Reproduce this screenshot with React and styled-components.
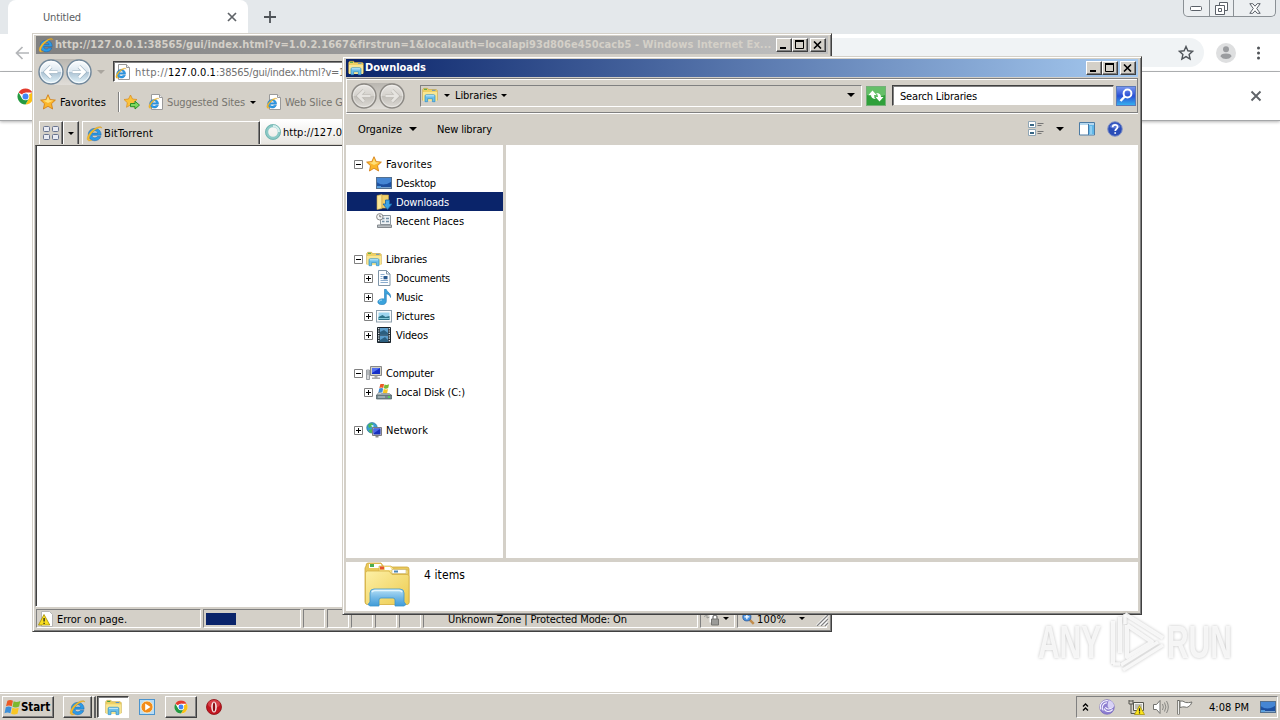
import React, { useLayoutEffect, useRef } from 'react';
import styled, { createGlobalStyle, css } from 'styled-components';

const Global = createGlobalStyle`
  * { box-sizing: border-box; }
  html, body { margin: 0; padding: 0; }
  body { width: 1280px; height: 720px; overflow: hidden; background: #fff; }
  svg { display: block; flex: none; }
`;

const FACE = '#d4d0c8';

const Desktop = styled.div`
  position: relative;
  width: 1280px;
  height: 720px;
  overflow: hidden;
  display: flex;
  flex-direction: column;
  font-family: 'DejaVu Sans Condensed', 'DejaVu Sans', sans-serif;
  font-stretch: condensed;
  font-size: 11px;
  line-height: 14px;
  color: #000;
`;

const LabelBox = styled.span`
  flex: none;
  white-space: pre;
  margin-left: ${p => p.$ml || 0}px;
  padding-top: ${p => (p.$bold ? 0 : 2)}px;
  color: ${p => p.$color || 'inherit'};
  font-weight: ${p => (p.$bold ? 700 : 400)};
  font-size: ${p => p.$size || 11}px;
`;

/* Text whose tracking is set so that it takes the given width. */
function Label({ w, ml, color, bold, size, children }) {
  const ref = useRef(null);
  useLayoutEffect(() => {
    const el = ref.current;
    if (!w) return;
    el.style.letterSpacing = '0px';
    const natural = el.getBoundingClientRect().width;
    el.style.letterSpacing = `${(w - natural) / el.textContent.length}px`;
  }, [w, children]);
  return (
    <LabelBox ref={ref} $ml={ml} $color={color} $bold={bold} $size={size}>{children}</LabelBox>
  );
}

const Gap = styled.div`
  flex: none;
  width: ${p => p.$w}px;
`;
const Spring = styled.div`
  flex: 1;
`;
const Row = styled.div`
  display: flex;
  align-items: center;
`;
const Arrow = styled.i`
  flex: none;
  width: 0;
  height: 0;
  margin-left: ${p => p.$ml || 0}px;
  border: ${p => p.$s || 3}px solid transparent;
  border-top-color: ${p => p.$color || '#000'};
  border-bottom-width: 0;
`;

/* ---------- icons ---------- */

const Svg = ({ s = 16, w, h, vb = '0 0 16 16', children }) => (
  <svg width={w || s} height={h || s} viewBox={vb} fill="none">{children}</svg>
);

const IELetter = () => (
  <>
    <path d="M14.200 9.600H5.600c.2 1.600 1.200 2.500 2.700 2.500 1 0 1.800-.4 2.300-1.200h3.300c-.8 2.400-2.900 3.900-5.600 3.900-3.600 0-6.100-2.400-6.100-5.800s2.500-5.800 6.100-5.800c3.500 0 6 2.500 5.900 6.400zM5.700 7.600h5.400C10.900 6.200 9.900 5.400 8.400 5.400S5.900 6.200 5.700 7.600z" fill="#2b9be8" stroke="#1463ac" strokeWidth=".5" />
    <path d="M15 2.900C14.300.6 10.600 1.300 6.500 4.500 2.400 7.700.3 12.200 1.500 14.200c.7 1.100 2.200.9 4-.1-1.700.4-2.500 0-2.500-1.200C3 10.600 5.400 7.200 8.600 4.700 11.600 2.300 14 1.700 15 2.900z" fill="#f6bb2b" stroke="#d39a1c" strokeWidth=".4" />
  </>
);
const IE = ({ s = 16 }) => <Svg s={s} vb="0 0 16 16"><IELetter /></Svg>;
const IEPage = () => (
  <Svg>
    <path d="M3.500.500h8l3 3v12h-11z" fill="#fff" stroke="#9a9a9a" />
    <path d="M11.500.500v3h3" stroke="#9a9a9a" fill="#eee" />
    <g transform="translate(0 3) scale(.75)"><IELetter /></g>
  </Svg>
);
const Star = ({ s = 16 }) => (
  <Svg s={s}>
    <path d="M8 .7l2.200 4.900 5.200.5-3.900 3.600 1.100 5.300L8 12.300 3.400 15l1.100-5.300L.6 6.100l5.200-.5z" fill="#fbb62a" stroke="#d17a12" strokeWidth=".8" />
    <path d="M8 2.500l1.600 3.700 3.700.4-5.300 2.400-5-2.400 3.500-.4z" fill="#ffe07a" />
  </Svg>
);
const StarAdd = () => (
  <Svg>
    <path d="M6.500 1l2 4 4.500.5-3.300 3.200.8 4.600-4-2.300-4 2.300.8-4.600L0 5.500 4.500 5z" fill="#fbc23a" stroke="#d88a1a" strokeWidth=".7" />
    <path d="M6.500 9.500h4.500v-2.300l4.500 3.900-4.500 3.900v-2.300H6.500z" fill="#7ed860" stroke="#1e8a1e" strokeWidth=".9" />
  </Svg>
);
const Libraries = ({ s = 16 }) => (
  <Svg s={s}>
    <path d="M.7 2.500l1-1.200h4l.8 1.200h7.800l1 1v9.700H.7z" fill="#efd163" stroke="#c7a53c" strokeWidth=".6" />
    <path d="M2 2.300h3" stroke="#43a047" />
    <path d="M10 3.300h3.500" stroke="#5b8fc9" />
    <path d="M1 5h14v9H1z" fill="#f8e693" />
    <path d="M3 9.200c0-1 .5-1.400 1.400-1.400h7.200c.9 0 1.400.4 1.400 1.400v5.500h-2.600v-3H5.600v3H3z" fill="#6bbfea" stroke="#2e8fc6" strokeWidth=".7" />
    <path d="M3.800 8.800h8.400" stroke="#c8ebfb" />
  </Svg>
);
const LibrariesLarge = () => (
  <Svg w={46} h={46} vb="0 0 46 46">
    <defs>
      <linearGradient id="lf" x1="0" y1="0" x2="1" y2="1">
        <stop offset="0" stopColor="#fdf0a6" /><stop offset="1" stopColor="#eccb4f" />
      </linearGradient>
      <linearGradient id="lb" x1="0" y1="0" x2="0" y2="1">
        <stop offset="0" stopColor="#b5e0f6" /><stop offset=".5" stopColor="#74b9e6" /><stop offset="1" stopColor="#3f9bd8" />
      </linearGradient>
    </defs>
    <path d="M2 4q0-3 2-3h13l3 4h23q2 0 2 2v33q0 2-2 2H3q-2 0-2-2V6z" fill="#e9c95c" stroke="#cda63a" strokeWidth=".8" />
    <path d="M5 2h12l1 4H5z" fill="#fff" />
    <path d="M6 2h4v3H6z" fill="#4caf50" />
    <path d="M15 4h12l3 3 14 1v4H15z" fill="#f7e38a" stroke="#d1ad42" strokeWidth=".6" />
    <path d="M16 4.500h4v3h-4z" fill="#e5522e" />
    <path d="M21 5h5l2 3h-7z" fill="#fff" />
    <path d="M28 7.500h14v4H28z" fill="#fff" stroke="#bda45b" strokeWidth=".5" />
    <path d="M30 8.500h4v2h-4z" fill="#4b86b8" />
    <path d="M1.500 11q0-2 2-2H25l3 3.500h15q2 0 2 2v26q0 2-2 2H3.500q-2 0-2-2z" fill="url(#lf)" stroke="#d6b144" strokeWidth=".8" />
    <path d="M6 31q0-4 4-4h26q4 0 4 4v9l2 2.500-2 1.500h-9v-6q0-2-2-2H17q-2 0-2 2v6H6l-2-1.500L6 40z" fill="url(#lb)" stroke="#3e94cc" strokeWidth=".8" />
    <path d="M8 30q1-1.500 3-1.500h24q2 0 3 1.500" stroke="#e2f5fd" strokeWidth="1.500" />
  </Svg>
);
const DesktopIcon = () => (
  <Svg>
    <rect x=".5" y="2.500" width="15" height="11" fill="#2863b8" stroke="#54708f" />
    <path d="M1 3h14v4Q7 12 1 7z" fill="#4586d4" />
    <path d="M1 8q7 4 14-1v5H1z" fill="#1d50a0" />
    <path d="M5 12.500h10" stroke="#7fa6cf" /><path d="M1 12h4" stroke="#71bdf4" strokeWidth="1.400" />
  </Svg>
);
const DownloadsIcon = () => (
  <Svg>
    <path d="M1 1.500L6 .5v14l-5 1z" fill="#f9e696" stroke="#c9a646" strokeWidth=".6" />
    <path d="M6 1h6.500v13H6z" fill="#efcf68" stroke="#c9a646" strokeWidth=".6" />
    <path d="M9.500 6h4v4H16l-4.500 5.500L7 10h2.500z" fill="#3ba3e6" stroke="#1464a6" strokeWidth=".8" />
  </Svg>
);
const Recent = () => (
  <Svg>
    <path d="M4.500 2.500h10v9h-10z" fill="#eef2f5" stroke="#8c979f" />
    <path d="M6 5.500h2.500M10 5.500h3M6 8.500h2.500M10 8.500h3" stroke="#7590a5" strokeWidth="1.500" />
    <path d="M1.500 12h14v2.500h-14z" fill="#b9bec2" stroke="#868b8f" />
    <circle cx="3.800" cy="3.800" r="3.200" fill="#f5f5f5" stroke="#8a8a8a" />
    <path d="M3.800 1.800v2h1.500" stroke="#555" strokeWidth=".8" />
  </Svg>
);
const Documents = () => (
  <Svg>
    <path d="M2.500.5h8L14 4v11.500H2.500z" fill="#fbfdff" stroke="#7f95a8" />
    <path d="M10.500.5V4H14" stroke="#7f95a8" />
    <path d="M4.500 4.500h4M4.500 6.500h2M4.500 8.500h2M4.500 10.500h7.500M4.500 12.500h7.500" stroke="#7da3c8" strokeWidth=".9" />
    <path d="M7.500 6h4v3.300h-4z" fill="#27598f" />
  </Svg>
);
const Music = () => (
  <Svg>
    <path d="M8.500.3h1.700c.3 2.600 5.100 3.400 4.300 8.200-.4-2-2-3.400-4.200-3.700v7.500c0 2-1.900 3.500-4.300 3.500S1.800 14.500 1.800 13c0-1.800 2.100-3.200 4.700-3.200.7 0 1.400.1 2 .4z" fill="#3aa3dc" stroke="#2079b8" strokeWidth=".6" />
    <path d="M3 12.500q1-1.500 3-1.500" stroke="#a8dcf5" />
  </Svg>
);
const Pictures = () => (
  <Svg>
    <rect x=".5" y="2.500" width="15" height="11.500" fill="#f8fafb" stroke="#8fa1ae" />
    <rect x="2.500" y="4.500" width="11" height="7.500" fill="#9dd5ee" />
    <path d="M2.500 9l4-2 3 2 4-1v4h-11z" fill="#2d7489" />
    <path d="M2.500 10.500h11" stroke="#83c8d8" />
  </Svg>
);
const Videos = () => (
  <Svg>
    <path d="M1.500.5h13v15h-13z" fill="#26333d" stroke="#18222a" />
    <path d="M4 1h8v6.500H4zM4 8.500h8V15H4z" fill="#5b9dcb" />
    <path d="M4 5l4-2 4 3v1.500H4zM4 13l5-3 3 3v2H4z" fill="#2b5f80" />
    <path d="M2.700 1v14M13.300 1v14" stroke="#eef4f8" strokeWidth="1.200" strokeDasharray="1.200 1.200" />
  </Svg>
);
const Computer = () => (
  <Svg>
    <path d="M.5 5h3v9.500h-3z" fill="#d6d8da" stroke="#888d92" strokeWidth=".8" />
    <path d="M1.300 7h1.400M1.300 9h1.400" stroke="#59646c" strokeWidth=".8" />
    <path d="M4.500 1.500h11v9h-11z" fill="#d2d2c8" stroke="#888" />
    <path d="M6 3h8v6H6z" fill="#1630c8" /><path d="M6 3h8L6 8z" fill="#5471ef" />
    <path d="M8.500 10.500h3v2h-3zM6 12.500h8v1.500H6z" fill="#aaa" />
  </Svg>
);
const FlagPanes = () => (
  <>
    <path d="M3.200 1.700q2.600-1.500 5.200 0L7.300 6.900Q4.500 5.500 1.900 6.900z" fill="#ec5a24" />
    <path d="M9.100 2.200q2.800 1.500 6.300-.4l-1.200 5.300q-3.200 1.600-6.200.2z" fill="#7cb82f" />
    <path d="M1.700 7.800q2.700-1.400 5.400 0L6 13.400q-2.800-1.400-5.500 0z" fill="#3c8fd9" />
    <path d="M7.900 8.300q2.900 1.400 6-.1l-1.200 5.600q-3.100 1.400-6 .1z" fill="#f9c623" />
  </>
);
const Flag = ({ s = 16 }) => <Svg s={s} vb="0 0 16 16"><FlagPanes /></Svg>;
const Disk = () => (
  <Svg>
    <g transform="translate(2 -1) scale(.72)"><FlagPanes /></g>
    <path d="M2.500 8.500h2l1 1h8l2 2H.5z" fill="#c7cfd2" stroke="#717b80" strokeWidth=".6" />
    <path d="M.5 11h15v4H.5z" fill="#758990" stroke="#4c5b61" strokeWidth=".7" />
    <path d="M2 13h7" stroke="#c1cdd2" /><path d="M12 13h2" stroke="#49e04b" strokeWidth="1.500" />
  </Svg>
);
const Network = () => (
  <Svg>
    <circle cx="6" cy="5.800" r="5.300" fill="#3a9dd5" stroke="#22708f" strokeWidth=".6" />
    <path d="M2 3q3-3 5-1l-1 3-3 1zM2.500 8l4-1 1 3-3 1z" fill="#4bb956" />
    <path d="M5 3.500q1.500-1 3 .5l-1.500 1.500z" fill="#cdeef8" />
    <path d="M6.500 5.500h9v8h-9z" fill="#d8d8d0" stroke="#7b7b83" />
    <path d="M7.500 6.500h7v6h-7z" fill="#1730bd" /><path d="M7.500 6.500h7l-7 5z" fill="#4a69eb" />
    <path d="M9.500 14h3v1.500h-3z" fill="#888" />
  </Svg>
);
const NavArrow = ({ back, active, s = 26 }) => (
  <Svg s={s} vb="0 0 26 26">
    <defs>
      <linearGradient id={active ? 'na' : 'nd'} x1="0" y1="0" x2="0" y2="1">
        {active
          ? <><stop offset="0" stopColor="#fdfeff" /><stop offset=".48" stopColor="#dce7ef" /><stop offset=".52" stopColor="#aec4d4" /><stop offset="1" stopColor="#e5f6fd" /></>
          : <><stop offset="0" stopColor="#e9e7e3" /><stop offset=".5" stopColor="#d4d1cc" /><stop offset=".52" stopColor="#c2bfb9" /><stop offset="1" stopColor="#dedbd6" /></>}
      </linearGradient>
    </defs>
    <circle cx="13" cy="13" r="12" fill={active ? 'url(#na)' : 'url(#nd)'} stroke={active ? '#71879a' : '#8b8883'} strokeWidth="1.400" />
    <circle cx="13" cy="13" r="10.700" stroke="#fff" strokeOpacity={active ? '.8' : '.4'} />
    <g transform={back ? '' : 'translate(26 0) scale(-1 1)'}>
      <path d="M13 7.500L7.500 13l5.500 5.500M8 13h11.500" stroke={active ? '#8fa6b8' : '#b4b1ab'} strokeWidth="4" strokeOpacity=".7" />
      <path d="M13 7.500L7.500 13l5.500 5.500M8 13h11.500" stroke={active ? '#fff' : '#e6e4e0'} strokeWidth="2.600" />
    </g>
  </Svg>
);
const QuickTabs = () => (
  <Svg s={18} vb="0 0 18 18">
    {[[1.500, 2.500], [10.500, 2.500], [1.500, 10.500], [10.500, 10.500]].map(([x, y]) => (
      <rect key={`${x}-${y}`} x={x} y={y} width="6" height="5" rx="1" fill="#e9ebf3" stroke="#69748f" />
    ))}
  </Svg>
);
const Spinner = () => (
  <Svg>
    <circle cx="8" cy="8" r="6.300" stroke="#8cc9c6" strokeWidth="3" />
    <path d="M8 1.700a6.300 6.300 0 0 1 6.300 6.300" stroke="#d5efee" strokeWidth="2.400" />
    <circle cx="8" cy="8" r="7.500" stroke="#58a4a0" strokeWidth=".6" />
  </Svg>
);
const Chrome = ({ s = 16 }) => (
  <Svg s={s}>
    <circle cx="8" cy="8" r="7.500" fill="#fff" />
    <path d="M8 8L1.500 4.250A7.500 7.500 0 0 1 14.500 4.250H8z" fill="#e33b2e" />
    <path d="M8 8L14.500 4.250A7.500 7.500 0 0 1 8 15.500l3.200-5.700z" fill="#fbc116" />
    <path d="M8 8l3.200 1.800L8 15.500A7.500 7.500 0 0 1 1.500 4.250L4.800 9.800z" fill="#249a41" />
    <circle cx="8" cy="8" r="3.600" fill="#fff" /><circle cx="8" cy="8" r="2.800" fill="#4285f4" />
  </Svg>
);
const Warning = () => (
  <Svg>
    <path d="M3.500.5h8l3 3v12h-11z" fill="#fff" stroke="#b5b5b5" />
    <path d="M6 3.500L11.800 14H.5z" fill="#f9df20" stroke="#a58d06" strokeWidth=".8" strokeLinejoin="round" />
    <path d="M6.100 7v3.500M6.100 11.700v1.300" stroke="#222" strokeWidth="1.300" />
  </Svg>
);
const Player = () => (
  <Svg>
    <rect x=".5" y=".5" width="15" height="15" fill="#b8dcf5" stroke="#4b94ce" />
    <circle cx="8" cy="8" r="6" fill="#f28c1a" stroke="#fff2d0" strokeWidth=".8" />
    <path d="M6.200 4.500L11.500 8l-5.300 3.500z" fill="#fff" />
  </Svg>
);
const Opera = () => (
  <Svg>
    <circle cx="8" cy="8" r="7.500" fill="#c21621" stroke="#8c0c12" strokeWidth=".8" />
    <ellipse cx="8" cy="5" rx="6" ry="4" fill="#e55b60" opacity=".6" />
    <ellipse cx="8" cy="8" rx="2.800" ry="5.500" fill="#f7e9e9" /><ellipse cx="8" cy="8" rx="1.200" ry="4.500" fill="#8f0e14" />
  </Svg>
);
const BitTorrent = () => (
  <Svg>
    <circle cx="8" cy="8" r="7.300" fill="#8e7fd0" stroke="#6c5cb8" strokeWidth=".6" />
    <path d="M2 10.500A6.200 6.200 0 0 1 9 1.800M4.300 11.500A4.800 4.800 0 0 1 8 3.800M5.200 9.500c.8 3.400 5 4.200 8.500 1M6.500 8c.6 2.500 4.500 2.800 7.800-.5" stroke="#f4f2ff" strokeWidth="1.100" />
    <path d="M9.500.9A7.300 7.300 0 0 1 15.200 7c-2 2.500-6 3-6.500.5C8.300 5 9.500 2.500 9.500.9z" fill="#d8d2f5" />
  </Svg>
);
const NetTray = () => (
  <Svg w={17} vb="0 0 17 16">
    <path d="M5.500 3.500h10v8h-10z" fill="#f4f4f0" stroke="#55554f" /><path d="M7 5h7v5H7z" fill="#bdbdb6" />
    <path d="M1 1v4h4V1M3 5v9.500h5M2 1v2M4 1v2" stroke="#55554f" />
    <path d="M11.500 6.500l5 9h-10z" fill="#fce51d" stroke="#9f8905" strokeWidth=".7" />
    <path d="M11.500 9.200v3.300M11.500 13.300v1.200" stroke="#222" strokeWidth="1.200" />
  </Svg>
);
const Speaker = () => (
  <Svg>
    <path d="M.5 5.500h3L7 1.500v13l-3.500-4h-3z" fill="#fff" stroke="#71716d" strokeLinejoin="round" />
    <path d="M9.500 5q1.700 3 0 6M11.500 3.500q2.800 4.500 0 9M13.500 2q3.600 6 0 12" stroke="#878783" />
  </Svg>
);
const ActionFlag = () => (
  <Svg>
    <path d="M1.500 1v14.500" stroke="#62625e" strokeWidth="2.400" /><path d="M1.500 2v13" stroke="#fff" strokeWidth=".9" />
    <path d="M3 2q3-.5 5.500 1.500 3 .5 6.500-.5-1 3.500-4 5-1.500.700-3 0Q6 7.500 3 8.500z" fill="#fff" stroke="#72726e" />
  </Svg>
);
const ViewIcon = () => (
  <Svg>
    <path d="M.5.5h7v6h-7zM.5 8.500h7v6h-7z" fill="#fff" stroke="#90a6b5" />
    <path d="M2 3h4v2H2zM2 11h4v2H2z" fill="#386684" />
    <path d="M9.500 2.500h6M9.500 4.500h4M9.500 10.500h6M9.500 12.500h4" stroke="#777" />
  </Svg>
);
const PaneIcon = () => (
  <Svg>
    <path d="M.5 1.500h15V14H.5z" fill="#fff" stroke="#4c7ba4" />
    <path d="M1 2h14v2H1z" fill="#b5d8f0" /><path d="M9.500 4H15v9.500H9.500z" fill="#61b7e8" /><path d="M9.500 3v11" stroke="#437aaa" />
    <path d="M12 5v8" stroke="#bfe5f9" />
  </Svg>
);
const Help = () => (
  <Svg>
    <circle cx="8" cy="8" r="7.300" fill="#2a4db8" stroke="#8494c6" />
    <path d="M2.500 6a6 6 0 0 1 11 0q-5 3-11 0z" fill="#5d79d6" />
    <path d="M5.600 6.300c0-3.400 5-3.200 5-.2 0 1.900-2.400 1.900-2.400 3.900M8.200 11.200v1.600" stroke="#fff" strokeWidth="1.700" />
  </Svg>
);
const Refresh = () => (
  <Svg s={20} vb="0 0 20 20">
    <rect x=".5" y=".5" width="19" height="19" fill="#2fa03a" stroke="#74b078" />
    <path d="M1 1h18v8Q10 13 1 9z" fill="#65bf68" />
    <path d="M2.500 9l4-4.500 4 4.500H8q0 3 2 4-5 0-5-4zM17.500 11l-4 4.500-4-4.500H12q0-3-2-4 5 0 5 4z" fill="#fff" />
  </Svg>
);
const SearchIcon = () => (
  <Svg s={20} vb="0 0 20 20">
    <defs>
      <linearGradient id="sr" x1="0" y1="0" x2="0" y2="1">
        <stop offset="0" stopColor="#7c9af0" /><stop offset=".5" stopColor="#2a4fd4" /><stop offset="1" stopColor="#37b4f0" />
      </linearGradient>
    </defs>
    <rect x=".5" y=".5" width="19" height="19" fill="url(#sr)" stroke="#5b79b9" />
    <circle cx="11.500" cy="7.500" r="3.900" stroke="#fff" strokeWidth="2" /><path d="M8.800 10.500L4.500 15" stroke="#fff" strokeWidth="2.400" />
  </Svg>
);
const Lock = () => (
  <Svg w={18} vb="0 0 18 16">
    <path d="M1 5.500l3-1.500v3l4-1.500" stroke="#9b9b97" /><path d="M6.500.5h7v11h-7z" fill="#fff" />
    <path d="M8.500 8h7v6h-7z" fill="#9b9b98" stroke="#747471" /><path d="M10 8V5.500q2-3 4 0V8" stroke="#777" strokeWidth="1.300" />
  </Svg>
);
const ZoomIcon = () => (
  <Svg s={13} vb="0 0 16 16">
    <path d="M9 9l5.500 5.500" stroke="#c28c4b" strokeWidth="3" /><circle cx="6" cy="6" r="5" fill="#4b93e0" stroke="#2b5b9e" />
    <path d="M6 3v6M3 6h6" stroke="#fff" strokeWidth="1.600" />
  </Svg>
);

/* ---------- browser behind ---------- */

const TabStrip = styled.div`
  flex: none;
  display: flex;
  height: 34px;
  padding-left: 8px;
  background: #e4e8eb;
`;
const BrowserTab = styled.div`
  display: flex;
  align-items: center;
  width: 240px;
  height: 34px;
  padding: 0 11px 0 35px;
  border-radius: 8px 8px 0 0;
  background: #fff;
`;
const CaptionGroup = styled.div`
  display: flex;
  width: 93px;
  height: 17px;
  margin-right: 4px;
  border: 1px solid #8a9095;
  border-top: 0;
  border-radius: 0 0 5px 5px;
  background: #eceff1;
`;
const CaptionCell = styled.div`
  display: flex;
  align-items: center;
  justify-content: center;
  width: ${p => p.$w}px;
  border-left: ${p => (p.$first ? 0 : 1)}px solid #8a9095;
`;
const BrowserBar = styled.div`
  flex: none;
  display: flex;
  align-items: center;
  height: 38px;
  padding: 0 15px 0 15px;
  background: #fff;
  border-bottom: 1px solid #b5b7b9;
`;
const Omnibox = styled.div`
  flex: 1;
  display: flex;
  align-items: center;
  justify-content: flex-end;
  height: 29px;
  margin: 0 12px 0 90px;
  padding-right: 10px;
  border-radius: 15px;
  background: #f0f3f5;
`;
const InfoBar = styled.div`
  flex: none;
  display: flex;
  align-items: center;
  justify-content: space-between;
  height: 49px;
  padding: 0 18px 0 17px;
  background: #fff;
  border-bottom: 1px solid #a5a7a9;
  box-shadow: 0 1px 3px rgba(0, 0, 0, 0.3);
`;
const Page = styled.div`
  flex: 1;
`;

function Browser() {
  return (
    <>
      <TabStrip>
        <BrowserTab>
          <Label w={38} color="#5a5d61">Untitled</Label>
          <Spring />
          <Svg s={10} vb="0 0 10 10"><path d="M1 1l8 8M9 1L1 9" stroke="#5f6368" strokeWidth="1.700" /></Svg>
        </BrowserTab>
        <Gap $w={16} />
        <Row><Svg s={12} vb="0 0 12 12"><path d="M6 0v12M0 6h12" stroke="#4e5358" strokeWidth="1.800" /></Svg></Row>
        <Spring />
        <CaptionGroup>
          <CaptionCell $w={25} $first><Svg w={12} h={5} vb="0 0 12 5"><rect x=".5" y=".5" width="11" height="4" rx="1" fill="#fff" stroke="#5a6068" /></Svg></CaptionCell>
          <CaptionCell $w={25}><Svg s={13} vb="0 0 13 13"><path d="M4.500.5h8v8h-8z" fill="#fff" stroke="#5a6068" /><path d="M.5 3.500h9v9h-9z" fill="#fff" stroke="#5a6068" /><path d="M3.500 6.500h3v3h-3z" stroke="#5a6068" /></Svg></CaptionCell>
          <CaptionCell $w={42}><Svg w={12} h={11} vb="0 0 12 11"><path d="M.8.700h3L6 3.200 8.200.700h3L7.700 5.500l3.500 4.800h-3L6 7.800l-2.200 2.500h-3l3.500-4.800z" fill="#fff" stroke="#5a6068" /></Svg></CaptionCell>
        </CaptionGroup>
      </TabStrip>
      <BrowserBar>
        <Svg s={14} vb="0 0 14 14"><path d="M14 7H1.500M7.500 1L1.500 7l6 6" stroke="#b4b6b9" strokeWidth="1.700" /></Svg>
        <Omnibox>
          <Svg><path d="M8 1.500l1.900 4.300 4.700.5-3.500 3.100 1 4.600L8 11.600 3.900 14l1-4.600L1.400 6.300l4.700-.5z" stroke="#50555a" strokeWidth="1.400" /></Svg>
        </Omnibox>
        <Svg s={20} vb="0 0 20 20"><circle cx="10" cy="10" r="10" fill="#dedfe0" /><circle cx="10" cy="6.200" r="3" fill="#9a9c9f" /><path d="M4.500 13.500q0-3 5.500-3t5.500 3q-2 2.500-5.500 2.500t-5.500-2.500z" fill="#9a9c9f" /></Svg>
        <Gap $w={20} />
        <Svg w={5} h={14} vb="0 0 5 14"><path d="M2.500 2h.01M2.500 7h.01M2.500 12h.01" stroke="#505458" strokeWidth="3" strokeLinecap="round" /></Svg>
        <Gap $w={4} />
      </BrowserBar>
      <InfoBar>
        <Chrome s={17} />
        <Svg s={12} vb="0 0 12 12"><path d="M1.500 1.500l9 9M10.500 1.500l-9 9" stroke="#5f6368" strokeWidth="1.900" /></Svg>
      </InfoBar>
      <Page />
    </>
  );
}

/* ---------- classic window parts ---------- */

const Window = styled.div`
  position: absolute;
  display: flex;
  flex-direction: column;
  left: ${p => p.$x}px;
  top: ${p => p.$y}px;
  width: ${p => p.$w}px;
  height: ${p => p.$h}px;
  padding: 1px 2px 2px;
  background: ${FACE};
  border: 1px solid;
  border-color: ${FACE} #404040 #404040 ${FACE};
  box-shadow: inset 1px 1px #fff, inset -1px -1px #808080;
`;
const TitleBar = styled.div`
  flex: none;
  display: flex;
  align-items: center;
  height: 18px;
  margin: 1px 1px 0;
  padding: 0 2px 0 1px;
  color: ${p => (p.$active ? '#fff' : FACE)};
  background: linear-gradient(90deg, ${p => (p.$active ? '#0a246a, #a6caf0' : '#808080, #c0c0c0')});
`;
const raised = css`
  border: 1px solid;
  border-color: #fff #404040 #404040 #fff;
  box-shadow: inset -1px -1px #808080;
`;
const Btn = styled.div`
  flex: none;
  display: flex;
  align-items: center;
  justify-content: center;
  width: 16px;
  height: 14px;
  margin-left: ${p => p.$ml || 0}px;
  background: ${FACE};
  ${raised}
`;
const WindowButtons = () => (
  <Row>
    <Btn><Svg w={10} h={10} vb="0 0 10 10"><path d="M1 8h6" stroke="#000" strokeWidth="2" /></Svg></Btn>
    <Btn><Svg w={10} h={10} vb="0 0 10 10"><path d="M.5 1.500h8v7h-8z" stroke="#000" /><path d="M0 1h9" stroke="#000" strokeWidth="2" /></Svg></Btn>
    <Btn $ml={2}><Svg w={10} h={8} vb="0 0 10 8"><path d="M1 .5l7 7M8 .5l-7 7" stroke="#000" strokeWidth="1.600" /></Svg></Btn>
  </Row>
);

/* ---------- Internet Explorer ---------- */

const IENav = styled.div`
  flex: none;
  display: flex;
  align-items: center;
  height: 35px;
  padding-left: 3px;
`;
const Capsule = styled.div`
  display: flex;
  gap: 2px;
  border-radius: 14px;
  background: linear-gradient(#b9b6b0, #e0ddd8);
`;
const AddressBox = styled.div`
  flex: 1;
  display: flex;
  align-items: center;
  height: 21px;
  margin-left: 8px;
  padding-left: 1px;
  background: #fff;
  border: 1px solid;
  border-color: #404040 #fff #fff #404040;
  box-shadow: inset 1px 1px #808080;
`;
const FavBar = styled.div`
  flex: none;
  display: flex;
  align-items: center;
  height: 26px;
  padding-left: 5px;
`;
const Separator = styled.div`
  width: 2px;
  height: 20px;
  margin: 0 4px 0 12px;
  border-left: 1px solid #808080;
  border-right: 1px solid #fff;
`;
const TabRow = styled.div`
  flex: none;
  display: flex;
  align-items: flex-end;
  height: 30px;
  padding: 0 0 1px 4px;
`;
const IETab = styled.div`
  flex: none;
  display: flex;
  align-items: center;
  width: ${p => p.$w}px;
  height: ${p => p.$h || 24}px;
  padding-left: ${p => p.$pl || 0}px;
  background: ${p => (p.$on ? 'linear-gradient(#fff, #e8e6e1)' : FACE)};
  border-top: 1px solid #fff;
  border-left: 1px solid #fff;
  border-right: 1px solid #404040;
  box-shadow: inset -1px 0 #808080;
`;
const IEPageArea = styled.div`
  flex: 1;
  background: #fff;
  border: 1px solid;
  border-color: #404040 #fff #fff #808080;
  box-shadow: inset 1px 0 #404040;
`;
const StatusBar = styled.div`
  flex: none;
  display: flex;
  align-items: stretch;
  gap: 2px;
  height: 19px;
  margin: 2px 1px 1px;
`;
const StatusCell = styled.div`
  flex: none;
  display: flex;
  align-items: center;
  width: ${p => p.$w}px;
  padding-left: ${p => p.$pl || 0}px;
  border: 1px solid;
  border-color: #808080 #fff #fff #808080;
`;
const Progress = styled.div`
  width: 30px;
  height: 12px;
  background: #0a246a;
`;

function Explorer8() {
  return (
    <Window $x={32} $y={33} $w={800} $h={599}>
      <TitleBar>
        <Gap $w={1} />
        <IE s={16} />
        <Label w={716} bold ml={1}>http://127.0.0.1:38565/gui/index.html?v=1.0.2.1667&amp;firstrun=1&amp;localauth=localapi93d806e450cacb5 - Windows Internet Ex...</Label>
        <Spring />
        <WindowButtons />
      </TitleBar>
      <IENav>
        <Capsule><NavArrow back active /><NavArrow active /></Capsule>
        <Arrow $ml={5} $s={4} $color="#aaa69f" />
        <AddressBox>
          <IEPage />
          <Label w={33} ml={4} color="#707070">http://</Label>
          <Label w={48}>127.0.0.1</Label>
          <Label w={132} color="#707070">:38565/gui/index.html?v=1.</Label>
        </AddressBox>
      </IENav>
      <FavBar>
        <Star />
        <Label w={46} ml={4}>Favorites</Label>
        <Separator />
        <StarAdd /><Gap $w={8} /><IEPage />
        <Label w={78} ml={3} color="#77756f">Suggested Sites</Label>
        <Arrow $ml={5} /><Gap $w={10} /><IEPage />
        <Label w={85} ml={3} color="#77756f">Web Slice Gallery</Label>
      </FavBar>
      <TabRow>
        <IETab $w={24} $h={23} $pl={2}><QuickTabs /></IETab>
        <IETab $w={16} $h={23} $pl={4}><Arrow /></IETab>
        <Gap $w={3} />
        <IETab $w={178} $h={23} $pl={3}><IE s={17} /><Label w={49} ml={1}>BitTorrent</Label></IETab>
        <IETab $w={200} $h={25} $pl={4} $on><Spinner /><Label w={78} ml={2}>http://127.0.0.1</Label></IETab>
      </TabRow>
      <IEPageArea />
      <StatusBar>
        <StatusCell $w={165} $pl={1}><Warning /><Label w={70} ml={3}>Error on page.</Label></StatusCell>
        <StatusCell $w={98} $pl={2}><Progress /></StatusCell>
        <StatusCell $w={22} /><StatusCell $w={22} /><StatusCell $w={22} /><StatusCell $w={22} /><StatusCell $w={22} />
        <StatusCell $w={275} $pl={24}><Label w={179}>Unknown Zone | Protected Mode: On</Label></StatusCell>
        <StatusCell $w={35} $pl={2}><Lock /><Arrow $ml={2} /></StatusCell>
        <StatusCell $w={90} $pl={4}>
          <ZoomIcon /><Label w={29} ml={2}>100%</Label><Arrow $ml={13} /><Gap $w={10} />
          <Svg s={14} vb="0 0 14 14"><path d="M2 14L13 3M6 14l7-7M10 14l3-3" stroke="#fff" strokeWidth="2.800" /><path d="M2 14L13 3M6 14l7-7M10 14l3-3" stroke="#808080" strokeWidth="1.300" /></Svg>
        </StatusCell>
      </StatusBar>
    </Window>
  );
}

/* ---------- file explorer ---------- */

const ExNav = styled.div`
  flex: none;
  display: flex;
  align-items: center;
  height: 35px;
  margin: 1px 1px 0;
  padding-left: 4px;
  border: 1px solid;
  border-color: #808080 #808080 #808080 #fff;
  box-shadow: inset 0 1px #fff, 0 1px #fff;
`;
const Crumbs = styled.div`
  display: flex;
  align-items: center;
  width: 442px;
  height: 22px;
  margin-left: 15px;
  padding: 0 0 1px 1px;
  border: 1px solid;
  border-color: #808080 #fff #fff #808080;
`;
const SearchBox = styled.div`
  display: flex;
  align-items: center;
  width: 222px;
  height: 21px;
  margin: 0 2px 0 6px;
  padding-left: 7px;
  background: #fff;
  border: 1px solid;
  border-color: #404040 #d4d0c8 #d4d0c8 #404040;
  box-shadow: inset 1px 1px #808080;
`;
const Commands = styled.div`
  flex: none;
  display: flex;
  align-items: center;
  height: 32px;
  padding: 0 16px 0 13px;
`;
const Body = styled.div`
  flex: 1;
  display: flex;
  margin: 0 1px;
  border-bottom: 4px solid ${FACE};
  background: #fff;
`;
const Tree = styled.div`
  width: 160px;
  padding: 9px 0 0 1px;
  border-right: 3px solid ${FACE};
`;
const TreeRow = styled.div`
  display: flex;
  align-items: center;
  height: 19px;
  padding-left: ${p => (p.$child ? 17 : 7)}px;
  color: ${p => (p.$on ? '#fff' : '#000')};
  background: ${p => (p.$on ? '#0a246a' : 'transparent')};
`;
const ExpanderBox = styled.span`
  flex: none;
  width: 9px;
  height: 9px;
  margin: 1px 3px 0 0;
`;
const Details = styled.div`
  flex: none;
  display: flex;
  height: 49px;
  margin: 0 1px 1px;
  padding-left: 18px;
  background: #fff;
`;
const DetailsText = styled.div`
  padding: 6px 0 0 14px;
`;

const Expander = ({ kind }) => (
  <ExpanderBox>
    {kind && (
      <Svg s={9} vb="0 0 9 9">
        <path d="M.5.5h8v8h-8z" fill="#fff" stroke="#808080" />
        <path d={kind === 'plus' ? 'M2 4.500h5M4.500 2v5' : 'M2 4.500h5'} stroke="#000" />
      </Svg>
    )}
  </ExpanderBox>
);

const TREE = [
  ['Favorites', 46, Star, 'minus'],
  ['Desktop', 40, DesktopIcon, null, true],
  ['Downloads', 53, DownloadsIcon, null, true, true],
  ['Recent Places', 68, Recent, null, true],
  null,
  ['Libraries', 41, Libraries, 'minus'],
  ['Documents', 54, Documents, 'plus', true],
  ['Music', 27, Music, 'plus', true],
  ['Pictures', 39, Pictures, 'plus', true],
  ['Videos', 32, Videos, 'plus', true],
  null,
  ['Computer', 48, Computer, 'minus'],
  ['Local Disk (C:)', 69, Disk, 'plus', true],
  null,
  ['Network', 42, Network, 'plus'],
];

function FileExplorer() {
  return (
    <Window $x={342} $y={56} $w={800} $h={559}>
      <TitleBar $active>
        <Gap $w={1} />
        <Libraries />
        <Label w={61} bold ml={1}>Downloads</Label>
        <Spring />
        <WindowButtons />
      </TitleBar>
      <ExNav>
        <Capsule><NavArrow back /><NavArrow /></Capsule>
        <Crumbs>
          <Libraries />
          <Arrow $ml={6} />
          <Label w={42} ml={5}>Libraries</Label>
          <Arrow $ml={4} />
          <Spring />
          <Arrow $s={4} /><Gap $w={6} />
        </Crumbs>
        <Gap $w={4} />
        <Refresh />
        <SearchBox><Label w={77}>Search Libraries</Label></SearchBox>
        <SearchIcon />
      </ExNav>
      <Commands>
        <Label w={44}>Organize</Label>
        <Arrow $ml={7} $s={4} />
        <Label w={55} ml={20}>New library</Label>
        <Spring />
        <ViewIcon /><Arrow $ml={12} $s={4} /><Gap $w={15} /><PaneIcon /><Gap $w={12} /><Help />
      </Commands>
      <Body>
        <Tree>
          {TREE.map((item, i) => {
            if (!item) return <TreeRow key={i} />;
            const [name, w, Icon, kind, child, on] = item;
            return (
              <TreeRow key={i} $child={child} $on={on}>
                <Expander kind={kind} />
                <Icon />
                <Label w={w} ml={4}>{name}</Label>
              </TreeRow>
            );
          })}
        </Tree>
      </Body>
      <Details>
        <LibrariesLarge />
        <DetailsText><Label w={41} size={12}>4 items</Label></DetailsText>
      </Details>
    </Window>
  );
}

/* ---------- taskbar ---------- */

const TaskBar = styled.div`
  flex: none;
  display: flex;
  align-items: flex-start;
  height: 28px;
  padding: 3px 2px 0;
  background: ${FACE};
  border-top: 1px solid ${FACE};
  box-shadow: inset 0 1px #fff;
`;
const TaskButton = styled.div`
  flex: none;
  display: flex;
  align-items: center;
  justify-content: ${p => (p.$start ? 'flex-start' : 'center')};
  width: ${p => p.$w}px;
  height: 22px;
  margin-left: ${p => p.$ml || 0}px;
  background: ${FACE};
  ${raised}
  ${p => p.$pressed && css`
    background: #fff;
    border-color: #404040 #fff #fff #404040;
    box-shadow: inset 1px 1px #808080;
  `}
`;
const StackEdge = styled.div`
  width: 4px;
  height: 22px;
  border-right: 2px solid #606060;
  border-top: 1px solid #fff;
`;
const Launcher = styled.div`
  display: flex;
  align-items: center;
  height: 22px;
  margin-left: ${p => p.$ml}px;
`;
const Tray = styled.div`
  display: flex;
  align-items: center;
  width: 202px;
  height: 22px;
  padding-left: 5px;
  border: 1px solid;
  border-color: #808080 #fff #fff #808080;
`;

function Taskbar() {
  return (
    <TaskBar>
      <TaskButton $w={52} $start><Gap $w={1} /><Flag s={17} /><Label w={29} bold size={11.500}>Start</Label></TaskButton>
      <TaskButton $w={29} $ml={9}><IE s={17} /></TaskButton>
      <StackEdge />
      <TaskButton $w={32} $ml={1} $pressed><Libraries s={17} /></TaskButton>
      <Launcher $ml={10}><Player /></Launcher>
      <TaskButton $w={32} $ml={10}><Chrome s={14} /></TaskButton>
      <Launcher $ml={9}><Opera /></Launcher>
      <Spring />
      <Tray>
        <Svg w={7} h={9} vb="0 0 7 9"><path d="M1 3.500L3.500 1 6 3.500M1 7.500L3.500 5 6 7.500" stroke="#000" strokeWidth="1.300" /></Svg>
        <Gap $w={10} /><BitTorrent /><Gap $w={13} /><NetTray /><Gap $w={8} /><Speaker /><Gap $w={8} /><ActionFlag />
        <Label w={40} ml={16}>4:08 PM</Label>
        <Gap $w={11} /><DesktopIcon />
      </Tray>
    </TaskBar>
  );
}

/* ---------- watermark ---------- */

const Mark = styled.div`
  position: absolute;
  left: 1038px;
  top: 610px;
  display: flex;
  align-items: center;
  width: 200px;
  height: 64px;
  filter: drop-shadow(0 0 1.5px rgba(0, 0, 0, 0.26));
`;
const MarkWord = styled.div`
  flex: none;
  width: ${p => p.$w}px;
  color: rgba(249, 249, 249, 0.92);
  font: 700 46px/64px 'Liberation Sans', sans-serif;
  white-space: nowrap;

  span {
    display: inline-block;
    transform: scaleX(${p => p.$k});
    transform-origin: 0 50%;
  }
`;

const Watermark = () => (
  <Mark>
    <MarkWord $w={71} $k={0.65}><span>ANY</span></MarkWord>
    <Svg w={58} h={62} vb="0 0 58 62">
      <path d="M4 10v43M11 6v36" stroke="#fafafa" strokeOpacity=".92" strokeWidth="4" />
      <path d="M16 3l38 24M18 14l25 17-25 15V14" stroke="#fafafa" strokeOpacity=".92" strokeWidth="4" strokeLinejoin="round" />
      <path d="M54 34L14 59M49 31L12 54M16 3v10M4 53h7" stroke="#fafafa" strokeOpacity=".92" strokeWidth="3.400" />
    </Svg>
    <MarkWord $w={68} $k={0.65}><span>RUN</span></MarkWord>
  </Mark>
);

export default function App() {
  return (
    <>
      <Global />
      <Desktop>
        <Browser />
        <Explorer8 />
        <FileExplorer />
        <Taskbar />
        <Watermark />
      </Desktop>
    </>
  );
}
